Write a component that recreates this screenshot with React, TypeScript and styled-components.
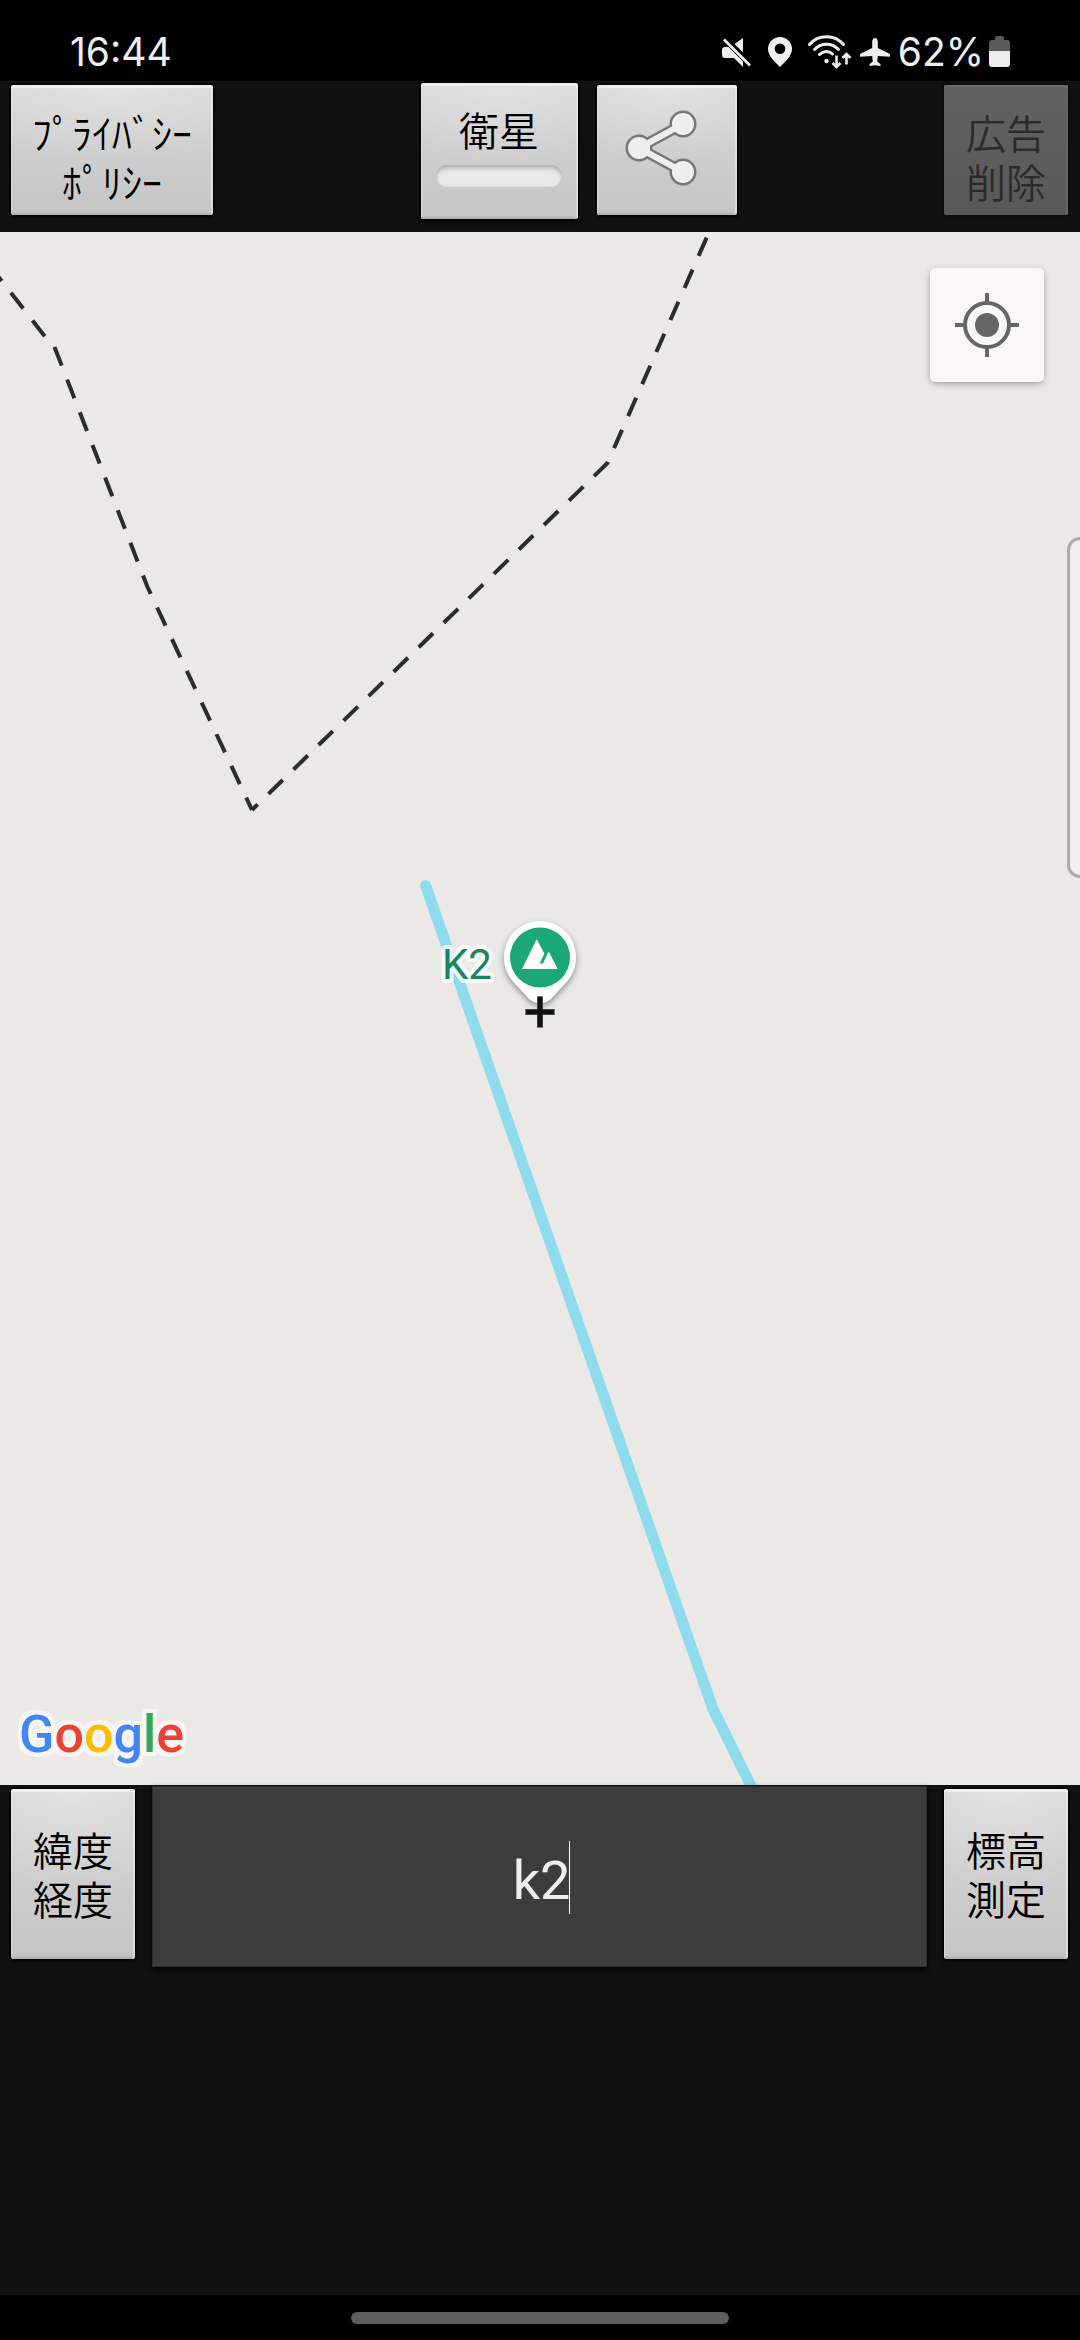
import React from "react";
import styled, { createGlobalStyle, css } from "styled-components";

const GlobalStyle = createGlobalStyle`
  *, *::before, *::after { box-sizing: border-box; }
  html, body { margin: 0; padding: 0; background: #111; }
  button, input { font-family: inherit; }
`;

const Screen = styled.div`
  display: flex;
  flex-direction: column;
  min-height: 100vh;
  background: #111;
  font-family: Roboto, "Noto Sans CJK JP", sans-serif;
`;

const StatusBar = styled.header`
  display: flex;
  align-items: center;
  justify-content: space-between;
  height: 81px;
  padding: 22px 70px 0;
  background: #000;
  color: #eee;
  font-family: Inter, sans-serif;
  font-size: 39px;
  line-height: 60px;
`;

const StatusIcons = styled.div`
  display: flex;
  align-items: center;
  gap: 8px;
`;

const BatteryStatus = styled.div`
  display: flex;
  align-items: center;
  gap: 5px;
`;

const Toolbar = styled.nav`
  display: flex;
  align-items: flex-start;
  justify-content: space-between;
  height: 151px;
  padding: 4px 12px 0 11px;
`;

const ToolGroup = styled.div`
  display: flex;
  align-items: flex-start;
  gap: 19px;
`;

const raised = css`
  border: 0;
  border-radius: 2px;
  color: #000;
  background:
    radial-gradient(ellipse 90% 60% at 50% 0, rgba(255, 255, 255, 0.25), rgba(255, 255, 255, 0)),
    linear-gradient(#d8d8d8, #c5c5c5);
  box-shadow:
    inset 0 3px 1px rgba(255, 255, 255, 0.5),
    inset -2px 0 1px rgba(255, 255, 255, 0.4),
    inset 1px 0 1px rgba(255, 255, 255, 0.4),
    inset 0 -2px 2px rgba(0, 0, 0, 0.12),
    0 0 2px 1px #000,
    0 3px 4px #080808;
`;

const PanelButton = styled.button<{ $width: number; $tall?: boolean }>`
  ${raised}
  display: flex;
  align-items: center;
  justify-content: center;
  width: ${(p) => p.$width}px;
  height: ${(p) => (p.$tall ? 170 : 130)}px;
  padding: ${(p) => (p.$tall ? 0 : 14)}px 0 0;
  font-size: 40px;
  font-weight: 350;
  line-height: 49px;
  text-align: center;
  white-space: pre-line;
  font-family: "Noto Sans CJK JP", sans-serif;

  &:disabled {
    color: #2b2b2b;
    background: linear-gradient(#626262, #585858);
    box-shadow: inset 0 2px 1px #6c6c6c, inset -2px 0 1px #686868, 0 0 2px 1px #0a0a0a;
  }
`;

const ShareButton = styled(PanelButton)`
  padding: 0 12px 4px 0;
`;

const ToggleButton = styled.button`
  ${raised}
  display: flex;
  flex-direction: column;
  align-items: center;
  gap: 11px;
  width: 157px;
  height: 136px;
  margin-top: -2px;
  padding: 22px 0 0;
  font-size: 40px;
  font-weight: 350;
  line-height: 49px;
  font-family: "Noto Sans CJK JP", sans-serif;
`;

const ToggleLamp = styled.span`
  width: 126px;
  height: 22px;
  border-radius: 11px;
  background: #e9e8ea;
  box-shadow: inset 0 4px 4px -1px #adadad, inset 0 0 2px #c4c4c4;
`;

const MapArea = styled.main`
  position: relative;
  flex: 1;
  min-height: 600px;
  overflow: hidden;
  background: #eae9e5;
`;

const MapCanvas = styled.svg`
  position: absolute;
  inset: 0;
  width: 100%;
  height: 100%;
`;

const LocateButton = styled.button`
  position: absolute;
  top: 36px;
  right: 36px;
  display: grid;
  place-items: center;
  width: 114px;
  height: 114px;
  padding: 0;
  border: 0;
  border-radius: 5px;
  background: #f9f8f7;
  box-shadow: 0 2px 6px rgba(0, 0, 0, 0.3);
`;

const EdgeHandle = styled.div`
  position: absolute;
  top: 305px;
  right: 0;
  width: 13px;
  height: 341px;
  border: 3px solid #acacaa;
  border-right: 0;
  border-radius: 13px 0 0 13px;
  background: #f0efeb;
`;

const Wordmark = styled.div`
  position: absolute;
  left: 19px;
  bottom: 18px;
  font-family: Roboto, sans-serif;
  font-size: 52px;
  font-weight: 500;
  line-height: 64px;
  filter:
    drop-shadow(4px 0 0 #f7f5f4)
    drop-shadow(-4px 0 0 #f7f5f4)
    drop-shadow(0 4px 0 #f7f5f4)
    drop-shadow(0 -4px 0 #f7f5f4);
`;

const Letter = styled.span<{ $color: string }>`
  color: ${(p) => p.$color};
`;

const SearchPanel = styled.footer`
  display: flex;
  align-items: flex-start;
  gap: 17px;
  height: 510px;
  padding: 0 12px 0 11px;
`;

const ActionSlot = styled.div`
  padding-top: 4px;
`;

const QueryBox = styled.div`
  position: relative;
  flex: 1;
  padding-top: 1px;
`;

const QueryInput = styled.input`
  display: block;
  width: 100%;
  height: 181px;
  padding: 8px 0 0 4px;
  border: 1px solid #2c2c2c;
  outline: 0;
  background: #3c3c3c;
  box-shadow: 0 3px 6px #000;
  color: #eee;
  caret-color: transparent;
  font-family: Roboto, sans-serif;
  font-size: 54px;
  text-align: center;
`;

const Caret = styled.span`
  position: absolute;
  top: 56px;
  left: calc(50% + 29px);
  width: 1px;
  height: 73px;
  background: #fff;
`;

const NavBar = styled.div`
  display: flex;
  justify-content: center;
  height: 45px;
  padding-top: 17px;
  background: #000;
`;

const NavPill = styled.div`
  width: 35%;
  height: 12px;
  border-radius: 6px;
  background: #5e5e5e;
`;

const MuteIcon = () => (
  <svg width="30" height="30" viewBox="0 0 30 30" fill="#eee" aria-hidden="true">
    <path d="M21 1v14.5L12.5 7z" />
    <path d="M0 13q0-3 3-3h3.500L21 24.500V30l-9-9H3q-3 0-3-3z" />
    <path d="M2 2.500 28 28.500" stroke="#eee" strokeWidth="2.600" />
  </svg>
);

const PinIcon = () => (
  <svg width="40" height="30" viewBox="0 0 40 30" aria-hidden="true">
    <path
      fill="#eee"
      fillRule="evenodd"
      d="M20 0a12 12 0 0 0-12 12c0 7 7 13 12 18 5-5 12-11 12-18A12 12 0 0 0 20 0zm0 6.500a5.300 5.300 0 1 1 0 10.600 5.300 5.300 0 0 1 0-10.600z"
    />
  </svg>
);

const WifiIcon = () => (
  <svg width="44" height="34" viewBox="0 0 44 34" fill="none" stroke="#eee" aria-hidden="true">
    <g strokeWidth="3" strokeLinecap="round">
      <path d="M1.500 9.500C10-1 27-1 35.500 9.500" />
      <path d="M6.500 14.500c6.500-7 17.500-7 24 0" />
      <path d="M11.500 19.500c4-4 9.500-4 13 -.5" />
    </g>
    <circle cx="18.500" cy="26" r="2.200" fill="#eee" stroke="none" />
    <g strokeWidth="2.600">
      <path d="M28.500 20.500v11.500M24.500 28l4 4 4-4" />
      <path d="M38.500 29.500V19M34.500 23l4-4 4 4" />
    </g>
  </svg>
);

const PlaneIcon = () => (
  <svg width="30" height="30" viewBox="0 0 30 30" fill="#eee" aria-hidden="true">
    <path d="M15 1c1.800 0 2.800 2 2.800 4v6L29 16.500q1 .5 1 1.500v1.800L17.800 19l-.6 5.500 3.300 2.700v1.800L15 28.200 9.500 29v-1.800l3.300-2.700-.6-5.500L0 19.800V18q0-1 1-1.500L12.200 11V5c0-2 1-4 2.800-4z" />
  </svg>
);

const BatteryIcon = () => (
  <svg width="21" height="31" viewBox="0 0 21 31" aria-hidden="true">
    <path fill="#5a5a5a" d="M6 2q0-2 2-2h5q2 0 2 2v2h3q3 0 3 3v9H0V7q0-3 3-3h3z" />
    <path fill="#eee" d="M0 15h21v13q0 3-3 3H3q-3 0-3-3z" />
  </svg>
);

const ShareIcon = () => (
  <svg width="72" height="76" viewBox="0 0 72 76" aria-hidden="true">
    <g fill="#777" stroke="#777">
      <path d="M58 14 14 38l44 24" fill="none" strokeWidth="11" />
      <circle cx="58" cy="14" r="13.500" stroke="none" />
      <circle cx="14" cy="38" r="13.500" stroke="none" />
      <circle cx="58" cy="62" r="13.500" stroke="none" />
    </g>
    <g fill="#eee" stroke="#eee">
      <path d="M58 14 14 38l44 24" fill="none" strokeWidth="6" />
      <circle cx="58" cy="14" r="11" stroke="none" />
      <circle cx="14" cy="38" r="11" stroke="none" />
      <circle cx="58" cy="62" r="11" stroke="none" />
    </g>
  </svg>
);

const LocateIcon = () => (
  <svg width="64" height="64" viewBox="0 0 64 64" fill="none" stroke="#666" strokeWidth="4" aria-hidden="true">
    <circle cx="32" cy="32" r="22" />
    <circle cx="32" cy="32" r="12" fill="#666" stroke="none" />
    <path d="M32 0v9M32 55v9M0 32h9M55 32h9" />
  </svg>
);

const MapDrawing = () => (
  <MapCanvas viewBox="0 0 1080 1553" preserveAspectRatio="xMidYMid slice" role="img" aria-label="K2">
    <defs>
      <filter id="pinShadow" x="-30%" y="-30%" width="160%" height="160%">
        <feDropShadow dx="0" dy="3" stdDeviation="3" floodColor="#000" floodOpacity="0.4" />
      </filter>
    </defs>

    {/* border lines */}
    <g fill="none" stroke="#2a2c2e" strokeWidth="4" strokeDasharray="20 15">
      <path d="M54 116-10 34" strokeDashoffset="20" />
      <path d="M54.500 115 147.500 355 252 578" />
      <path d="M252 578 607.500 231 710 -2" strokeDashoffset="12" />
    </g>

    {/* river */}
    <path
      d="M425.700 653.700 712.700 1476.300 755 1562"
      fill="none"
      stroke="#8fdbee"
      strokeWidth="11"
      strokeLinecap="round"
      strokeLinejoin="round"
    />

    <text
      x="442"
      y="747"
      fontFamily="Roboto, sans-serif"
      fontSize="42"
      fill="#1d8460"
      stroke="#fff"
      strokeOpacity="0.750"
      strokeWidth="8"
      strokeLinejoin="round"
      paintOrder="stroke"
    >
      K2
    </text>

    {/* summit pin */}
    <path
      fill="#fff"
      filter="url(#pinShadow)"
      d="M540 689a36 36 0 0 0-36 36c0 10 4 18.500 10 25.500l15 16q5 4.500 11 4.500t11-4.500l15-16c6-7 10-15.500 10-25.500a36 36 0 0 0-36-36z"
    />
    <circle cx="540" cy="725.500" r="30" fill="#1ba874" />
    <path fill="#fff" d="M522 737 536.700 707.300 544.300 721.500 539.700 731.500H543L548.700 719.500 557.700 737z" />

    {/* centre cross */}
    <path d="M540 764v32M525 780h30" stroke="#777" strokeWidth="6" />
    <path d="M540 765v30M526 780h28" stroke="#111" strokeWidth="5" />
  </MapCanvas>
);

const WORDMARK: [string, string][] = [
  ["G", "#4285f4"],
  ["o", "#ea4335"],
  ["o", "#fbbc05"],
  ["g", "#4285f4"],
  ["l", "#34a853"],
  ["e", "#ea4335"],
];

export default function App() {
  const [query, setQuery] = React.useState("k2");
  const [satellite, setSatellite] = React.useState(false);

  return (
    <Screen>
      <GlobalStyle />
      <StatusBar>
        <span>16:44</span>
        <StatusIcons>
          <MuteIcon />
          <PinIcon />
          <WifiIcon />
          <PlaneIcon />
          <BatteryStatus>
            <span>62%</span>
            <BatteryIcon />
          </BatteryStatus>
        </StatusIcons>
      </StatusBar>

      <Toolbar>
        <PanelButton type="button" $width={202}>{"ﾌﾟﾗｲﾊﾞｼｰ\nﾎﾟﾘｼｰ"}</PanelButton>
        <ToolGroup>
          <ToggleButton type="button" aria-pressed={satellite} onClick={() => setSatellite(!satellite)}>
            衛星
            <ToggleLamp />
          </ToggleButton>
          <ShareButton type="button" $width={140} aria-label="共有">
            <ShareIcon />
          </ShareButton>
        </ToolGroup>
        <PanelButton type="button" $width={124} disabled>{"広告\n削除"}</PanelButton>
      </Toolbar>

      <MapArea>
        <MapDrawing />
        <LocateButton type="button" aria-label="現在地">
          <LocateIcon />
        </LocateButton>
        <EdgeHandle />
        <Wordmark>
          {WORDMARK.map(([letter, color], i) => (
            <Letter key={i} $color={color}>{letter}</Letter>
          ))}
        </Wordmark>
      </MapArea>

      <SearchPanel>
        <ActionSlot>
          <PanelButton type="button" $width={124} $tall>{"緯度\n経度"}</PanelButton>
        </ActionSlot>
        <QueryBox>
          <QueryInput aria-label="検索" value={query} onChange={(e) => setQuery(e.target.value)} />
          <Caret />
        </QueryBox>
        <ActionSlot>
          <PanelButton type="button" $width={124} $tall>{"標高\n測定"}</PanelButton>
        </ActionSlot>
      </SearchPanel>

      <NavBar>
        <NavPill />
      </NavBar>
    </Screen>
  );
}
